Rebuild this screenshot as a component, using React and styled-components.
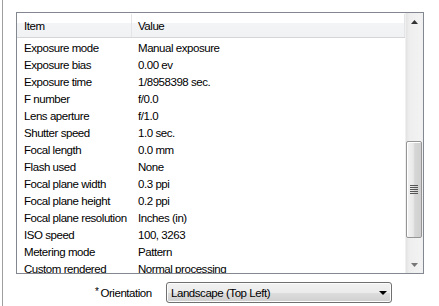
import styled, { createGlobalStyle } from 'styled-components'

const GlobalStyle = createGlobalStyle`
  html, body {
    margin: 0;
    padding: 0;
    background: #ffffff;
  }
  body {
    font-family: "Liberation Sans", Arial, sans-serif;
    font-size: 11.5px;
    letter-spacing: -0.45px;
    color: #000000;
  }
`

const Frame = styled.div`
  box-sizing: border-box;
  width: 437px;
  height: 306px;
  margin-left: 2px;
  border-left: 1px solid #a0a0a0;
  padding: 12px 0 0 13px;
  overflow: hidden;
`

const ListBox = styled.div`
  box-sizing: border-box;
  width: 408px;
  height: 262px;
  border: 1px solid #828790;
  display: flex;
  overflow: hidden;
`

const ListContent = styled.div`
  flex: 1;
  display: flex;
  flex-direction: column;
  overflow: hidden;
`

const Header = styled.div`
  display: grid;
  grid-template-columns: 115px 1fr;
  height: 23px;
  flex-shrink: 0;
  border-top: 1px solid #ffffff;
  border-bottom: 1px solid #d5d5d5;
  background: linear-gradient(#ffffff 0%, #ffffff 40%, #f3f4f6 41%, #f1f2f4 100%);
`

const HeaderCell = styled.div`
  display: flex;
  align-items: center;
  padding-left: ${(p) => p.pad}px;
  border-right: 1px solid #e3e5e8;
`

const Rows = styled.div`
  padding-top: 1px;
`

const Row = styled.div`
  display: grid;
  grid-template-columns: 115px 1fr;
  height: 17px;
  align-items: center;
  white-space: nowrap;
`

const Cell = styled.div`
  padding-left: ${(p) => p.pad}px;
  overflow: hidden;
`

const ScrollBar = styled.div`
  width: 17px;
  flex-shrink: 0;
  display: flex;
  flex-direction: column;
  background: linear-gradient(90deg, #e3e3e3 0%, #eeeeee 20%, #f2f2f2 80%, #f0f0f0 100%);
  border-left: 1px solid #f0f0f0;
`

const ArrowButton = styled.div`
  height: 17px;
  display: flex;
  align-items: center;
  justify-content: center;
`

const Track = styled.div`
  flex: 1;
  display: flex;
  flex-direction: column;
  padding-top: ${(p) => p.top}px;
  padding-bottom: ${(p) => p.bottom}px;
`

const Thumb = styled.div`
  box-sizing: border-box;
  height: 97px;
  margin: 0 1px 0 0;
  border: 1px solid #959595;
  border-radius: 2px;
  background: linear-gradient(90deg, #f3f3f3 0%, #e8e8e8 45%, #d6d6d6 55%, #cfcfcf 100%);
  box-shadow: inset 1px 1px 0 #ffffff;
  display: flex;
  align-items: center;
  justify-content: center;
`

const FormRow = styled.div`
  display: flex;
  align-items: center;
  margin-top: 8px;
  padding-left: 79px;
  gap: 14px;
`

const Label = styled.div`
  width: 57px;
  white-space: nowrap;
`

const Required = styled.span`
  font-size: 10px;
  position: relative;
  top: -2px;
  margin-right: 2px;
`

const Select = styled.div`
  box-sizing: border-box;
  width: 226px;
  height: 21px;
  border: 1px solid #707070;
  border-radius: 3px;
  background: linear-gradient(#f2f2f2 0%, #ebebeb 50%, #dddddd 51%, #cfcfcf 100%);
  box-shadow: inset 0 0 0 1px #fcfcfc;
  display: flex;
  align-items: center;
  justify-content: space-between;
  padding: 0 4px 0 4px;
`

const rows = [
  ['Exposure mode', 'Manual exposure'],
  ['Exposure bias', '0.00 ev'],
  ['Exposure time', '1/8958398 sec.'],
  ['F number', 'f/0.0'],
  ['Lens aperture', 'f/1.0'],
  ['Shutter speed', '1.0 sec.'],
  ['Focal length', '0.0 mm'],
  ['Flash used', 'None'],
  ['Focal plane width', '0.3 ppi'],
  ['Focal plane height', '0.2 ppi'],
  ['Focal plane resolution', 'Inches (in)'],
  ['ISO speed', '100, 3263'],
  ['Metering mode', 'Pattern'],
  ['Custom rendered', 'Normal processing'],
]

function Triangle({ up, color = '#444', size = 7 }) {
  const h = Math.ceil(size / 2)
  return (
    <svg width={size} height={h} viewBox={`0 0 ${size} ${h}`}>
      <path
        d={up ? `M0 ${h} L${size / 2} 0 L${size} ${h} Z` : `M0 0 L${size} 0 L${size / 2} ${h} Z`}
        fill={color}
      />
    </svg>
  )
}

function Grip() {
  return (
    <svg width="8" height="9" viewBox="0 0 8 9">
      {[0, 2, 4, 6, 8].map((y) => (
        <rect key={y} x="0" y={y} width="8" height="1" fill="#555" />
      ))}
    </svg>
  )
}

function App() {
  return (
    <>
      <GlobalStyle />
      <Frame>
        <ListBox>
          <ListContent>
            <Header>
              <HeaderCell pad={7}>Item</HeaderCell>
              <HeaderCell pad={6}>Value</HeaderCell>
            </Header>
            <Rows>
              {rows.map(([item, value]) => (
                <Row key={item}>
                  <Cell pad={7}>{item}</Cell>
                  <Cell pad={6}>{value}</Cell>
                </Row>
              ))}
            </Rows>
          </ListContent>
          <ScrollBar>
            <ArrowButton>
              <Triangle up color="#333" />
            </ArrowButton>
            <Track top={111} bottom={18}>
              <Thumb>
                <Grip />
              </Thumb>
            </Track>
            <ArrowButton>
              <Triangle color="#777" />
            </ArrowButton>
          </ScrollBar>
        </ListBox>
        <FormRow>
          <Label>
            <Required>*</Required>Orientation
          </Label>
          <Select>
            <span>Landscape (Top Left)</span>
            <Triangle color="#000" size={8} />
          </Select>
        </FormRow>
      </Frame>
    </>
  )
}

export default App
